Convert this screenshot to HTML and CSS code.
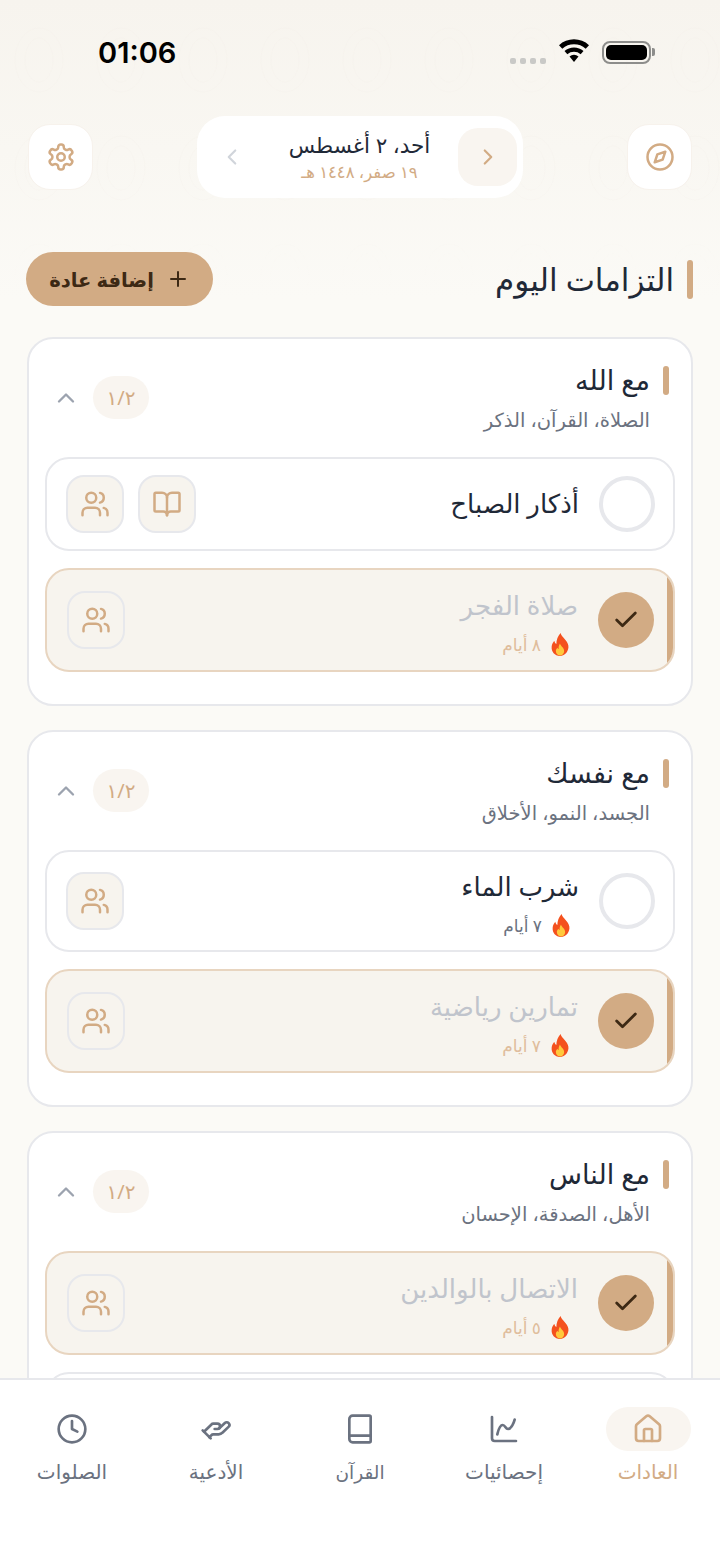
FILE: index.html
```html
<!DOCTYPE html>
<html lang="ar" dir="rtl">
<head>
<meta charset="utf-8">
<title>التزامات اليوم</title>
<link rel="stylesheet" href="styles.css">
</head>
<body>
<svg class="defs" width="0" height="0" aria-hidden="true">
  <symbol id="i-users" viewBox="0 0 24 24"><path d="M16 21v-2a4 4 0 0 0-4-4H6a4 4 0 0 0-4 4v2"/><circle cx="9" cy="7" r="4"/><path d="M22 21v-2a4 4 0 0 0-3-3.87"/><path d="M16 3.13a4 4 0 0 1 0 7.75"/></symbol>
  <symbol id="i-book-open" viewBox="0 0 24 24"><path d="M12 7v14"/><path d="M3 18a1 1 0 0 1-1-1V4a1 1 0 0 1 1-1h5a4 4 0 0 1 4 4 4 4 0 0 1 4-4h5a1 1 0 0 1 1 1v13a1 1 0 0 1-1 1h-6a3 3 0 0 0-3 3 3 3 0 0 0-3-3z"/></symbol>
  <symbol id="i-check" viewBox="0 0 24 24"><path d="M20 6 9 17l-5-5"/></symbol>
  <symbol id="i-up" viewBox="0 0 24 24"><path d="m18 15-6-6-6 6"/></symbol>
  <symbol id="i-flame" viewBox="3 0 18 24"><path class="fl-o" d="M12.500 1c1 4 6.500 6.500 7.500 12 .8 5-3 10-8 10s-8.500-4-8-9c.2-2.500 1.500-4 2.500-5.500.3 1.500 1 2.500 2 3C8.500 7.500 10 4 12.500 1z"/><path class="fl-y" d="M12 11c.5 2.500 4 4 4 7.200 0 2.500-1.800 4.300-4 4.300s-4-1.800-4-4.200c0-1.500.8-2.500 1.500-3.300.3.800.7 1.200 1.200 1.400-.2-2 .3-4 1.300-5.400z"/></symbol>
</svg>

<svg class="pattern" aria-hidden="true">
  <defs>
    <pattern id="motif" width="82" height="108" patternUnits="userSpaceOnUse">
      <ellipse cx="39" cy="60" rx="24" ry="32"/>
      <ellipse cx="39" cy="60" rx="14" ry="22"/>
    </pattern>
  </defs>
  <rect class="pattern-fill" width="720" height="320"/>
</svg>

<div class="screen">
  <header class="status">
    <span class="time">01:06</span>
    <div class="status-icons">
      <span class="signal"><i></i><i></i><i></i><i></i></span>
      <svg class="wifi" viewBox="0 0 32 24"><path d="M16 23 11.500 17.500a7 7 0 0 1 9 0z"/><path d="M9.300 15.200 6.500 12a14.500 14.500 0 0 1 19 0l-2.800 3.200a10.500 10.500 0 0 0-13.400 0z"/><path d="M4.300 9.700 1 6.200a22 22 0 0 1 30 0l-3.300 3.500a17.500 17.500 0 0 0-23.400 0z"/></svg>
      <span class="battery"><b></b></span>
    </div>
  </header>

  <section class="topbar">
    <button class="square-btn" aria-label="القبلة">
      <svg class="ic ic-30" viewBox="0 0 24 24"><circle cx="12" cy="12" r="10"/><polygon points="16.240 7.760 14.120 14.120 7.760 16.240 9.880 9.880"/></svg>
    </button>
    <div class="date-pill">
      <span class="date-next"><svg class="ic ic-26" viewBox="0 0 24 24"><path d="m9 18 6-6-6-6"/></svg></span>
      <div class="date-text">
        <div class="date-main">أحد، ٢ أغسطس</div>
        <div class="date-sub">١٩ صفر، ١٤٤٨ هـ</div>
      </div>
      <span class="date-prev"><svg class="ic ic-26" viewBox="0 0 24 24"><path d="m15 18-6-6 6-6"/></svg></span>
    </div>
    <button class="square-btn" aria-label="الإعدادات">
      <svg class="ic ic-30" viewBox="0 0 24 24"><path d="M12.220 2h-.44a2 2 0 0 0-2 2v.18a2 2 0 0 1-1 1.730l-.43.25a2 2 0 0 1-2 0l-.15-.08a2 2 0 0 0-2.730.73l-.22.38a2 2 0 0 0 .73 2.730l.15.1a2 2 0 0 1 1 1.720v.51a2 2 0 0 1-1 1.740l-.15.09a2 2 0 0 0-.73 2.730l.22.38a2 2 0 0 0 2.730.73l.15-.08a2 2 0 0 1 2 0l.43.25a2 2 0 0 1 1 1.730V20a2 2 0 0 0 2 2h.44a2 2 0 0 0 2-2v-.18a2 2 0 0 1 1-1.730l.43-.25a2 2 0 0 1 2 0l.15.08a2 2 0 0 0 2.730-.73l.22-.39a2 2 0 0 0-.73-2.730l-.15-.08a2 2 0 0 1-1-1.740v-.5a2 2 0 0 1 1-1.740l.15-.09a2 2 0 0 0 .73-2.730l-.22-.38a2 2 0 0 0-2.730-.73l-.15.08a2 2 0 0 1-2 0l-.43-.25a2 2 0 0 1-1-1.730V4a2 2 0 0 0-2-2z"/><circle cx="12" cy="12" r="3"/></svg>
    </button>
  </section>

  <section class="heading">
    <h1 class="page-title">التزامات اليوم</h1>
    <button class="add-btn">
      <svg class="ic ic-24" viewBox="0 0 24 24"><path d="M5 12h14M12 5v14"/></svg>
      <span>إضافة عادة</span>
    </button>
  </section>

  <main class="cards">
    <article class="card">
      <div class="card-head">
        <div class="card-titles">
          <h2 class="card-title">مع الله</h2>
          <p class="card-sub">الصلاة، القرآن، الذكر</p>
        </div>
        <div class="card-tools">
          <span class="count">١/٢</span>
          <svg class="ic ic-up"><use href="#i-up"/></svg>
        </div>
      </div>
      <div class="habit">
        <span class="circle"></span>
        <div class="habit-text"><div class="habit-name">أذكار الصباح</div></div>
        <div class="habit-actions">
          <span class="icon-btn"><svg class="ic ic-30"><use href="#i-book-open"/></svg></span>
          <span class="icon-btn"><svg class="ic ic-30"><use href="#i-users"/></svg></span>
        </div>
      </div>
      <div class="habit done">
        <span class="circle"><svg class="ic ic-check"><use href="#i-check"/></svg></span>
        <div class="habit-text has-streak">
          <div class="habit-name">صلاة الفجر</div>
          <div class="streak"><svg class="flame"><use href="#i-flame"/></svg><span>٨ أيام</span></div>
        </div>
        <div class="habit-actions"><span class="icon-btn"><svg class="ic ic-30"><use href="#i-users"/></svg></span></div>
      </div>
    </article>

    <article class="card">
      <div class="card-head">
        <div class="card-titles">
          <h2 class="card-title">مع نفسك</h2>
          <p class="card-sub">الجسد، النمو، الأخلاق</p>
        </div>
        <div class="card-tools">
          <span class="count">١/٢</span>
          <svg class="ic ic-up"><use href="#i-up"/></svg>
        </div>
      </div>
      <div class="habit streaked">
        <span class="circle"></span>
        <div class="habit-text has-streak">
          <div class="habit-name">شرب الماء</div>
          <div class="streak"><svg class="flame"><use href="#i-flame"/></svg><span>٧ أيام</span></div>
        </div>
        <div class="habit-actions"><span class="icon-btn"><svg class="ic ic-30"><use href="#i-users"/></svg></span></div>
      </div>
      <div class="habit done">
        <span class="circle"><svg class="ic ic-check"><use href="#i-check"/></svg></span>
        <div class="habit-text has-streak">
          <div class="habit-name">تمارين رياضية</div>
          <div class="streak"><svg class="flame"><use href="#i-flame"/></svg><span>٧ أيام</span></div>
        </div>
        <div class="habit-actions"><span class="icon-btn"><svg class="ic ic-30"><use href="#i-users"/></svg></span></div>
      </div>
    </article>

    <article class="card">
      <div class="card-head">
        <div class="card-titles">
          <h2 class="card-title">مع الناس</h2>
          <p class="card-sub">الأهل، الصدقة، الإحسان</p>
        </div>
        <div class="card-tools">
          <span class="count">١/٢</span>
          <svg class="ic ic-up"><use href="#i-up"/></svg>
        </div>
      </div>
      <div class="habit done">
        <span class="circle"><svg class="ic ic-check"><use href="#i-check"/></svg></span>
        <div class="habit-text has-streak">
          <div class="habit-name">الاتصال بالوالدين</div>
          <div class="streak"><svg class="flame"><use href="#i-flame"/></svg><span>٥ أيام</span></div>
        </div>
        <div class="habit-actions"><span class="icon-btn"><svg class="ic ic-30"><use href="#i-users"/></svg></span></div>
      </div>
      <div class="habit"></div>
    </article>
  </main>
</div>

<nav class="tabbar">
  <a class="tab active">
    <span class="tab-icon"><svg class="ic ic-32" viewBox="0 0 24 24"><path d="M15 21v-8a1 1 0 0 0-1-1h-4a1 1 0 0 0-1 1v8"/><path d="M3 10a2 2 0 0 1 .709-1.528l7-5.999a2 2 0 0 1 2.582 0l7 5.999A2 2 0 0 1 21 10v9a2 2 0 0 1-2 2H5a2 2 0 0 1-2-2z"/></svg></span>
    <span class="tab-label">العادات</span>
  </a>
  <a class="tab">
    <span class="tab-icon"><svg class="ic ic-32" viewBox="0 0 24 24"><path d="M3 3v16a2 2 0 0 0 2 2h16"/><path d="M7 16c.5-2 1.500-7 4-7 2 0 2 3 4 3 2.500 0 4.500-5 5-7"/></svg></span>
    <span class="tab-label">إحصائيات</span>
  </a>
  <a class="tab">
    <span class="tab-icon"><svg class="ic ic-32" viewBox="0 0 24 24"><path d="M4 19.500v-15A2.500 2.500 0 0 1 6.500 2H19a1 1 0 0 1 1 1v18a1 1 0 0 1-1 1H6.500A2.500 2.500 0 0 1 4 19.500z"/><path d="M4 17h16"/></svg></span>
    <span class="tab-label tab-label-sm">القرآن</span>
  </a>
  <a class="tab">
    <span class="tab-icon"><svg class="ic ic-32" viewBox="0 0 24 24"><path d="M11 12h2a2 2 0 1 0 0-4h-3c-.6 0-1.100.2-1.400.6L3 14"/><path d="m7 18 1.600-1.400c.3-.4.8-.6 1.400-.6h4c1.100 0 2.100-.4 2.800-1.200l4.600-4.400a2 2 0 0 0-2.750-2.910l-4.200 3.900"/><path d="m2 13 6 6"/></svg></span>
    <span class="tab-label">الأدعية</span>
  </a>
  <a class="tab">
    <span class="tab-icon"><svg class="ic ic-32" viewBox="0 0 24 24"><circle cx="12" cy="12" r="10"/><path d="M12 6v6l4 2"/></svg></span>
    <span class="tab-label">الصلوات</span>
  </a>
</nav>
</body>
</html>
```

FILE: styles.css
```css
* { box-sizing: border-box; }
html, body { margin: 0; padding: 0; }
body {
  width: 720px;
  height: 1564px;
  overflow: hidden;
  position: relative;
  font-family: "Noto Sans", "Open Sans", "DejaVu Sans", sans-serif;
  color: #1f2937;
  background: linear-gradient(180deg, #f7f4ee 0, #fbfaf6 300px, #fbfaf6 100%);
}
.defs { position: absolute; }
.pattern {
  position: absolute;
  top: 0;
  left: 0;
  width: 720px;
  height: 320px;
  pointer-events: none;
  -webkit-mask-image: linear-gradient(180deg, #000 50%, transparent 90%);
  mask-image: linear-gradient(180deg, #000 50%, transparent 90%);
}
.pattern-fill { fill: url(#motif); }
#motif ellipse { fill: none; stroke: #f1ece3; stroke-width: .5; opacity: .3; }
.screen { position: relative; }

.ic { fill: none; stroke: currentColor; stroke-width: 2; stroke-linecap: round; stroke-linejoin: round; display: block; }
.ic-24 { width: 24px; height: 24px; }
.ic-26 { width: 26px; height: 26px; }
.ic-30 { width: 30px; height: 30px; }
.ic-32 { width: 32px; height: 32px; }

/* status bar */
.status {
  direction: ltr;
  height: 116px;
  padding: 34px 69px 0 98px;
  display: flex;
  justify-content: space-between;
  align-items: flex-start;
}
.time { font-family: Inter, sans-serif; font-weight: 600; font-size: 29px; line-height: 38px; color: #000; }
.status-icons { display: flex; align-items: center; gap: 12px; height: 36px; }
.signal { display: flex; gap: 4px; margin-top: 17px; }
.signal i { width: 6px; height: 6px; border-radius: 2px; background: #c9c9c7; display: block; }
.wifi { width: 32px; height: 24px; fill: #000; margin-top: -2px; }
.battery {
  position: relative;
  width: 49px;
  height: 23px;
  border: 2px solid #8d8d8b;
  border-radius: 8px;
  padding: 2px;
  display: block;
}
.battery b { display: block; height: 100%; background: #000; border-radius: 5px; }
.battery::after {
  content: "";
  position: absolute;
  right: -6px;
  top: 5px;
  width: 3px;
  height: 8px;
  border-radius: 0 2px 2px 0;
  background: #8d8d8b;
}

/* top bar */
.topbar {
  display: flex;
  justify-content: space-between;
  align-items: center;
  padding: 0 28px;
  height: 82px;
}
.square-btn {
  width: 65px;
  height: 66px;
  border-radius: 22px;
  border: 1px solid #f7f2ec;
  background: #fff;
  color: #d2ab84;
  display: flex;
  align-items: center;
  justify-content: center;
  padding: 0;
}
.date-pill {
  width: 326px;
  height: 82px;
  border-radius: 28px;
  background: #fff;
  display: flex;
  align-items: center;
  padding: 0 6px;
}
.date-next {
  width: 59px;
  height: 58px;
  border-radius: 20px;
  background: #f9f5f0;
  color: #d2ab84;
  display: flex;
  align-items: center;
  justify-content: center;
}
.date-text { flex: 1; text-align: center; white-space: nowrap; }
.date-main { font-size: 21.5px; line-height: 29px; color: #1f2937; }
.date-sub { font-size: 16.500px; line-height: 25px; color: #d2ab84; }
.date-prev { width: 58px; color: #d1d5db; display: flex; align-items: center; justify-content: center; }

/* heading */
.heading {
  margin-top: 54px;
  height: 54px;
  display: flex;
  justify-content: space-between;
  align-items: center;
  padding: 0 27px 0 26px;
}
.page-title {
  margin: 0;
  font-size: 31px;
  font-weight: 400;
  line-height: 40px;
  color: #1f2937;
  display: flex;
  align-items: center;
  gap: 13px;
}
.page-title::before { content: ""; width: 6px; height: 39px; border-radius: 3px; background: #d2ab84; }
.add-btn {
  width: 187px;
  height: 54px;
  border: 0;
  border-radius: 27px;
  background: #d2ab84;
  color: #3d2914;
  font: 700 19.5px "Noto Sans", "DejaVu Sans", sans-serif;
  display: flex;
  align-items: center;
  justify-content: center;
  gap: 12px;
  padding: 0;
}

/* cards */
.cards { margin-top: 31px; padding: 0 27px; display: flex; flex-direction: column; gap: 24px; }
.card {
  background: #fff;
  border: 2px solid #e7e8ec;
  border-radius: 26px;
  padding: 0 16px 32px;
  display: flex;
  flex-direction: column;
  gap: 17px;
}
.card-head {
  height: 101px;
  display: flex;
  justify-content: space-between;
  align-items: flex-start;
  padding: 25px 6px 0 7px;
}
.card-title {
  margin: 0;
  font-size: 27px;
  font-weight: 400;
  line-height: 30px;
  color: #1f2937;
  display: flex;
  align-items: center;
  gap: 13px;
}
.card-title::before { content: ""; width: 6px; height: 29px; border-radius: 3px; background: #d2ab84; margin-top: 2px; }
.card-sub { margin: 13px 19px 0 0; font-size: 19.5px; line-height: 24px; color: #6b7280; }
.card-tools { display: flex; align-items: center; gap: 13px; margin-top: 12px; }
.count {
  width: 56px;
  height: 43px;
  border-radius: 22px;
  background: #f9f5f0;
  color: #d2ab84;
  font-size: 20px;
  display: flex;
  align-items: center;
  justify-content: center;
}
.ic-up { width: 28px; height: 28px; color: #9ca3af; }

/* habits */
.habit {
  min-height: 94px;
  border: 2px solid #e7e8ec;
  border-radius: 24px;
  background: #fff;
  display: flex;
  align-items: center;
  padding: 8px 18px 8px 19px;
  gap: 20px;
}
.habit.streaked { min-height: 102px; }
.circle {
  width: 56px;
  height: 56px;
  border-radius: 50%;
  border: 4px solid #e7e8ec;
  display: flex;
  align-items: center;
  justify-content: center;
  flex: none;
}
.habit-text { flex: 1; }
.has-streak { margin-top: 6px; }
.habit-name { font-size: 26px; line-height: 36px; margin-top: -2px; color: #1f2937; }
.streak { display: flex; align-items: center; gap: 9px; padding-right: 8px; font-size: 17px; line-height: 24px; color: #6b7280; margin-top: 9px; }
.flame { width: 20px; height: 25px; }
.fl-o { fill: #f4511e; }
.fl-y { fill: #ffc93c; }
.habit-actions { display: flex; gap: 14px; }
.icon-btn {
  width: 58px;
  height: 58px;
  border-radius: 18px;
  border: 2px solid #e7e8ec;
  background: #f7f4ee;
  color: #d2ab84;
  display: flex;
  align-items: center;
  justify-content: center;
}
.habit.done {
  min-height: 104px;
  border-color: #e8d5c0;
  background: #f7f4ee;
  position: relative;
  overflow: hidden;
  padding: 8px 19px 8px 20px;
}
.habit.done::after {
  content: "";
  position: absolute;
  top: 0;
  bottom: 0;
  right: 0;
  width: 6px;
  background: #d2ab84;
}
.done .circle { background: #d2ab84; border: 0; color: #3d2914; }
.ic-check { width: 28px; height: 28px; stroke-width: 2.4; }
.done .habit-name { color: #c0c4cc; }
.done .streak { color: #dfbd9c; }

/* tab bar */
.tabbar {
  position: fixed;
  left: 0;
  right: 0;
  top: 1378px;
  height: 186px;
  background: #fff;
  border-top: 2px solid #e7e8ec;
  display: grid;
  grid-template-columns: repeat(5, 144px);
  padding-top: 27px;
}
.tab { display: flex; flex-direction: column; align-items: center; color: #6b7280; }
.tab-icon { width: 85px; height: 44px; border-radius: 22px; display: flex; align-items: center; justify-content: center; }
.active { color: #d2ab84; }
.active .tab-icon { background: #f9f5f0; }
.tab-label { font-size: 20px; line-height: 24px; font-weight: 500; margin-top: 9px; white-space: nowrap; }
.tab-label-sm { font-size: 18.5px; }
```
